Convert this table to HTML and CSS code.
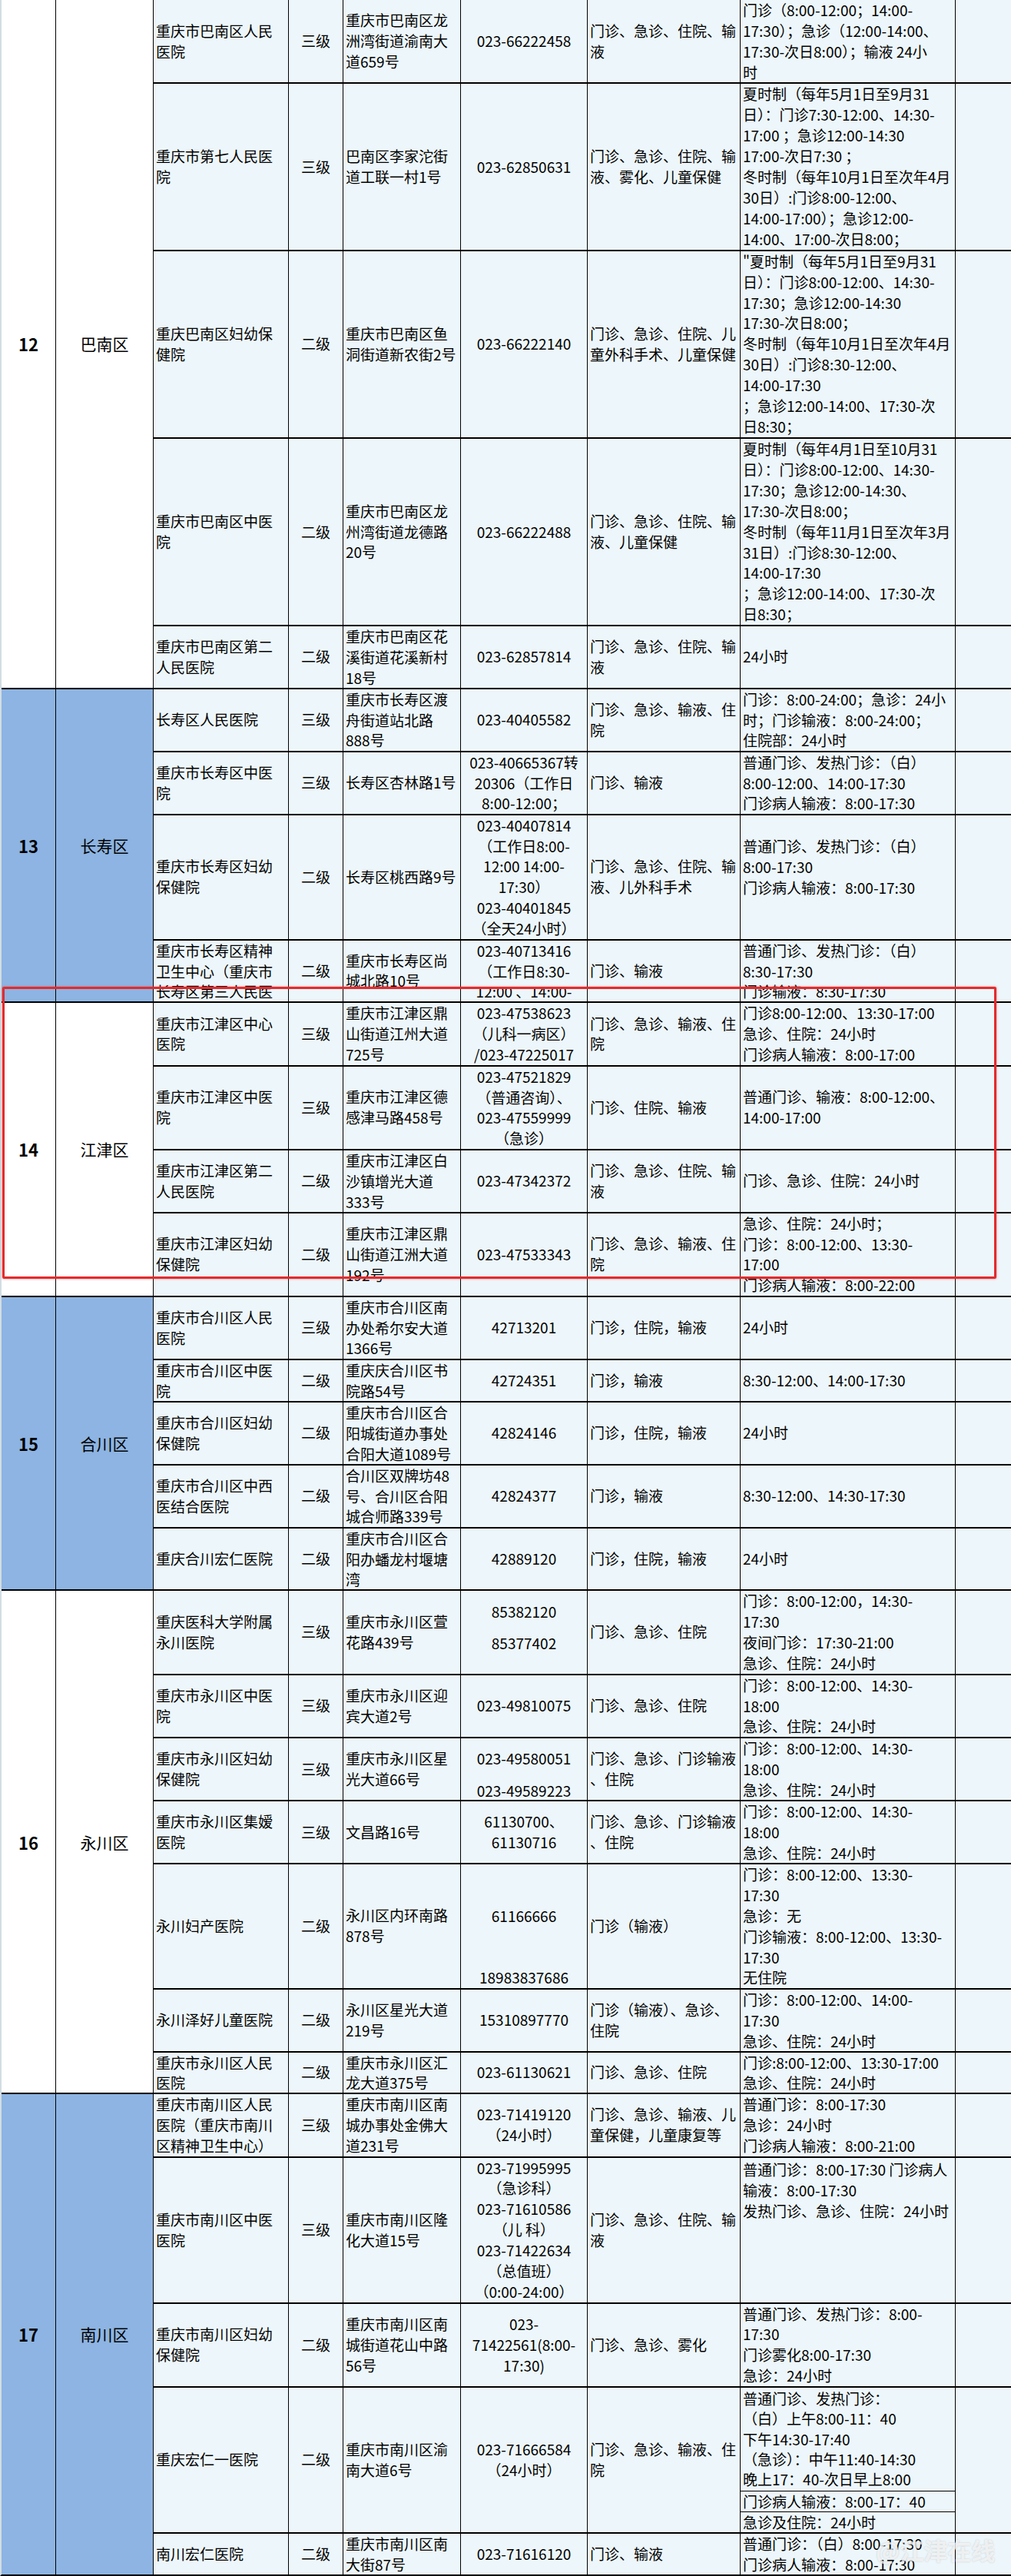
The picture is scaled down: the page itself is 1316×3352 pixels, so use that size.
FILE: index.html
```html
<!DOCTYPE html>
<html lang="zh-CN">
<head>
<meta charset="utf-8">
<title>医院列表</title>
<link rel="stylesheet" href="styles.css">
</head>
<body>
<div class="sheet">
  <div class="grid">
    <div class="grp w num g12">12</div><div class="grp w dist g12">巴南区</div>
    <div class="grp b num g13">13</div><div class="grp b dist g13">长寿区</div>
    <div class="grp w num g14">14</div><div class="grp w dist g14">江津区</div>
    <div class="grp b num g15">15</div><div class="grp b dist g15">合川区</div>
    <div class="grp w num g16">16</div><div class="grp w dist g16">永川区</div>
    <div class="grp b num g17">17</div><div class="grp b dist g17">南川区</div>

    <!-- R1 -->
    <div class="c"><p>重庆市巴南区人民<br>医院</p></div>
    <div class="c m"><p>三级</p></div>
    <div class="c"><p>重庆市巴南区龙<br>洲湾街道渝南大<br>道659号</p></div>
    <div class="c m"><p>023-66222458</p></div>
    <div class="c"><p>门诊、急诊、住院、输<br>液</p></div>
    <div class="c"><p>门诊（8:00-12:00；14:00-<br>17:30）；急诊（12:00-14:00、<br>17:30-次日8:00）；输液 24小<br>时</p></div>
    <div class="c"></div>

    <!-- R2 -->
    <div class="c"><p>重庆市第七人民医<br>院</p></div>
    <div class="c m"><p>三级</p></div>
    <div class="c"><p>巴南区李家沱街<br>道工联一村1号</p></div>
    <div class="c m"><p>023-62850631</p></div>
    <div class="c"><p>门诊、急诊、住院、输<br>液、雾化、儿童保健</p></div>
    <div class="c"><p>夏时制（每年5月1日至9月31<br>日）：门诊7:30-12:00、14:30-<br>17:00 ；急诊12:00-14:30<br>17:00-次日7:30 ；<br>冬时制（每年10月1日至次年4月<br>30日）:门诊8:00-12:00、<br>14:00-17:00）；急诊12:00-<br>14:00、17:00-次日8:00；</p></div>
    <div class="c"></div>

    <!-- R3 -->
    <div class="c"><p>重庆巴南区妇幼保<br>健院</p></div>
    <div class="c m"><p>二级</p></div>
    <div class="c"><p>重庆市巴南区鱼<br>洞街道新农街2号</p></div>
    <div class="c m"><p>023-66222140</p></div>
    <div class="c"><p>门诊、急诊、住院、儿<br>童外科手术、儿童保健</p></div>
    <div class="c"><p>"夏时制（每年5月1日至9月31<br>日）：门诊8:00-12:00、14:30-<br>17:30；急诊12:00-14:30<br>17:30-次日8:00；<br>冬时制（每年10月1日至次年4月<br>30日）:门诊8:30-12:00、<br>14:00-17:30<br>；急诊12:00-14:00、17:30-次<br>日8:30；</p></div>
    <div class="c"></div>

    <!-- R4 -->
    <div class="c"><p>重庆市巴南区中医<br>院</p></div>
    <div class="c m"><p>二级</p></div>
    <div class="c"><p>重庆市巴南区龙<br>州湾街道龙德路<br>20号</p></div>
    <div class="c m"><p>023-66222488</p></div>
    <div class="c"><p>门诊、急诊、住院、输<br>液、儿童保健</p></div>
    <div class="c"><p>夏时制（每年4月1日至10月31<br>日）：门诊8:00-12:00、14:30-<br>17:30；急诊12:00-14:30、<br>17:30-次日8:00；<br>冬时制（每年11月1日至次年3月<br>31日）:门诊8:30-12:00、<br>14:00-17:30<br>；急诊12:00-14:00、17:30-次<br>日8:30；</p></div>
    <div class="c"></div>

    <!-- R5 -->
    <div class="c"><p>重庆市巴南区第二<br>人民医院</p></div>
    <div class="c m"><p>二级</p></div>
    <div class="c"><p>重庆市巴南区花<br>溪街道花溪新村<br>18号</p></div>
    <div class="c m"><p>023-62857814</p></div>
    <div class="c"><p>门诊、急诊、住院、输<br>液</p></div>
    <div class="c"><p>24小时</p></div>
    <div class="c"></div>

    <!-- R6 -->
    <div class="c"><p>长寿区人民医院</p></div>
    <div class="c m"><p>三级</p></div>
    <div class="c"><p>重庆市长寿区渡<br>舟街道站北路<br>888号</p></div>
    <div class="c m"><p>023-40405582</p></div>
    <div class="c"><p>门诊、急诊、输液、住<br>院</p></div>
    <div class="c"><p>门诊：8:00-24:00；急诊：24小<br>时；门诊输液：8:00-24:00；<br>住院部：24小时</p></div>
    <div class="c"></div>

    <!-- R7 -->
    <div class="c"><p>重庆市长寿区中医<br>院</p></div>
    <div class="c m"><p>三级</p></div>
    <div class="c"><p>长寿区杏林路1号</p></div>
    <div class="c m"><p>023-40665367转<br>20306（工作日<br>8:00-12:00；</p></div>
    <div class="c"><p>门诊、输液</p></div>
    <div class="c"><p>普通门诊、发热门诊：（白）<br>8:00-12:00、14:00-17:30<br>门诊病人输液：8:00-17:30</p></div>
    <div class="c"></div>

    <!-- R8 -->
    <div class="c"><p>重庆市长寿区妇幼<br>保健院</p></div>
    <div class="c m"><p>二级</p></div>
    <div class="c"><p>长寿区桃西路9号</p></div>
    <div class="c m"><p>023-40407814<br>（工作日8:00-<br>12:00 14:00-<br>17:30）<br>023-40401845<br>（全天24小时）</p></div>
    <div class="c"><p>门诊、急诊、住院、输<br>液、儿外科手术</p></div>
    <div class="c top"><p class="pt-line">普通门诊、发热门诊：（白）<br>8:00-17:30</p><p class="mt-wide">门诊病人输液：8:00-17:30</p></div>
    <div class="c"></div>

    <!-- R9 -->
    <div class="c"><p>重庆市长寿区精神<br>卫生中心（重庆市<br>长寿区第三人民医</p></div>
    <div class="c m"><p>二级</p></div>
    <div class="c"><p>重庆市长寿区尚<br>城北路10号</p></div>
    <div class="c m"><p>023-40713416<br>（工作日8:30-<br>12:00 、14:00-</p></div>
    <div class="c"><p>门诊、输液</p></div>
    <div class="c"><p>普通门诊、发热门诊：（白）<br>8:30-17:30<br>门诊输液：8:30-17:30</p></div>
    <div class="c"></div>

    <!-- R10 -->
    <div class="c"><p>重庆市江津区中心<br>医院</p></div>
    <div class="c m"><p>三级</p></div>
    <div class="c"><p>重庆市江津区鼎<br>山街道江州大道<br>725号</p></div>
    <div class="c m"><p>023-47538623<br>（儿科一病区）<br>/023-47225017</p></div>
    <div class="c"><p>门诊、急诊、输液、住<br>院</p></div>
    <div class="c"><p>门诊8:00-12:00、13:30-17:00<br>急诊、住院：24小时<br>门诊病人输液：8:00-17:00</p></div>
    <div class="c"></div>

    <!-- R11 -->
    <div class="c"><p>重庆市江津区中医<br>院</p></div>
    <div class="c m"><p>三级</p></div>
    <div class="c"><p>重庆市江津区德<br>感津马路458号</p></div>
    <div class="c m"><p>023-47521829<br>（普通咨询）、<br>023-47559999<br>（急诊）</p></div>
    <div class="c"><p>门诊、住院、输液</p></div>
    <div class="c"><p>普通门诊、输液：8:00-12:00、<br>14:00-17:00</p></div>
    <div class="c"></div>

    <!-- R12 -->
    <div class="c"><p>重庆市江津区第二<br>人民医院</p></div>
    <div class="c m"><p>二级</p></div>
    <div class="c"><p>重庆市江津区白<br>沙镇增光大道<br>333号</p></div>
    <div class="c m"><p>023-47342372</p></div>
    <div class="c"><p>门诊、急诊、住院、输<br>液</p></div>
    <div class="c"><p>门诊、急诊、住院：24小时</p></div>
    <div class="c"></div>

    <!-- R13 -->
    <div class="c"><p>重庆市江津区妇幼<br>保健院</p></div>
    <div class="c m"><p>二级</p></div>
    <div class="c"><p>重庆市江津区鼎<br>山街道江洲大道<br>192号</p></div>
    <div class="c m"><p>023-47533343</p></div>
    <div class="c"><p>门诊、急诊、输液、住<br>院</p></div>
    <div class="c"><p>急诊、住院：24小时；<br>门诊：8:00-12:00、13:30-<br>17:00<br>门诊病人输液：8:00-22:00</p></div>
    <div class="c"></div>

    <!-- R14 -->
    <div class="c"><p>重庆市合川区人民<br>医院</p></div>
    <div class="c m"><p>三级</p></div>
    <div class="c"><p>重庆市合川区南<br>办处希尔安大道<br>1366号</p></div>
    <div class="c m"><p>42713201</p></div>
    <div class="c"><p>门诊，住院，输液</p></div>
    <div class="c"><p>24小时</p></div>
    <div class="c"></div>

    <!-- R15 -->
    <div class="c"><p>重庆市合川区中医<br>院</p></div>
    <div class="c m"><p>二级</p></div>
    <div class="c"><p>重庆庆合川区书<br>院路54号</p></div>
    <div class="c m"><p>42724351</p></div>
    <div class="c"><p>门诊，输液</p></div>
    <div class="c"><p>8:30-12:00、14:00-17:30</p></div>
    <div class="c"></div>

    <!-- R16 -->
    <div class="c"><p>重庆市合川区妇幼<br>保健院</p></div>
    <div class="c m"><p>二级</p></div>
    <div class="c"><p>重庆市合川区合<br>阳城街道办事处<br>合阳大道1089号</p></div>
    <div class="c m"><p>42824146</p></div>
    <div class="c"><p>门诊，住院，输液</p></div>
    <div class="c"><p>24小时</p></div>
    <div class="c"></div>

    <!-- R17 -->
    <div class="c"><p>重庆市合川区中西<br>医结合医院</p></div>
    <div class="c m"><p>二级</p></div>
    <div class="c"><p>合川区双牌坊48<br>号、合川区合阳<br>城合师路339号</p></div>
    <div class="c m"><p>42824377</p></div>
    <div class="c"><p>门诊，输液</p></div>
    <div class="c"><p>8:30-12:00、14:30-17:30</p></div>
    <div class="c"></div>

    <!-- R18 -->
    <div class="c"><p>重庆合川宏仁医院</p></div>
    <div class="c m"><p>二级</p></div>
    <div class="c"><p>重庆市合川区合<br>阳办蟠龙村堰塘<br>湾</p></div>
    <div class="c m"><p>42889120</p></div>
    <div class="c"><p>门诊，住院，输液</p></div>
    <div class="c"><p>24小时</p></div>
    <div class="c"></div>

    <!-- R19 -->
    <div class="c"><p>重庆医科大学附属<br>永川医院</p></div>
    <div class="c m"><p>三级</p></div>
    <div class="c"><p>重庆市永川区萱<br>花路439号</p></div>
    <div class="c m top split"><p>85382120</p><p>85377402</p></div>
    <div class="c"><p>门诊、急诊、住院</p></div>
    <div class="c"><p>门诊：8:00-12:00，14:30-<br>17:30<br>夜间门诊：17:30-21:00<br>急诊、住院：24小时</p></div>
    <div class="c"></div>

    <!-- R20 -->
    <div class="c"><p>重庆市永川区中医<br>院</p></div>
    <div class="c m"><p>三级</p></div>
    <div class="c"><p>重庆市永川区迎<br>宾大道2号</p></div>
    <div class="c m"><p>023-49810075</p></div>
    <div class="c"><p>门诊、急诊、住院</p></div>
    <div class="c"><p>门诊：8:00-12:00、14:30-<br>18:00<br>急诊、住院：24小时</p></div>
    <div class="c"></div>

    <!-- R21 -->
    <div class="c"><p>重庆市永川区妇幼<br>保健院</p></div>
    <div class="c m"><p>三级</p></div>
    <div class="c"><p>重庆市永川区星<br>光大道66号</p></div>
    <div class="c m top split"><p>023-49580051</p><p>023-49589223</p></div>
    <div class="c"><p>门诊、急诊、门诊输液<br>、住院</p></div>
    <div class="c"><p>门诊：8:00-12:00、14:30-<br>18:00<br>急诊、住院：24小时</p></div>
    <div class="c"></div>

    <!-- R22 -->
    <div class="c"><p>重庆市永川区集嫒<br>医院</p></div>
    <div class="c m"><p>三级</p></div>
    <div class="c"><p>文昌路16号</p></div>
    <div class="c m"><p>61130700、<br>61130716</p></div>
    <div class="c"><p>门诊、急诊、门诊输液<br>、住院</p></div>
    <div class="c"><p>门诊：8:00-12:00、14:30-<br>18:00<br>急诊、住院：24小时</p></div>
    <div class="c"></div>

    <!-- R23 -->
    <div class="c"><p>永川妇产医院</p></div>
    <div class="c m"><p>二级</p></div>
    <div class="c"><p>永川区内环南路<br>878号</p></div>
    <div class="c m"><p><br><br>61166666<br><br><br>18983837686</p></div>
    <div class="c"><p>门诊（输液）</p></div>
    <div class="c"><p>门诊：8:00-12:00、13:30-<br>17:30<br>急诊：无<br>门诊输液：8:00-12:00、13:30-<br>17:30<br>无住院</p></div>
    <div class="c"></div>

    <!-- R24 -->
    <div class="c"><p>永川泽好儿童医院</p></div>
    <div class="c m"><p>二级</p></div>
    <div class="c"><p>永川区星光大道<br>219号</p></div>
    <div class="c m"><p>15310897770</p></div>
    <div class="c"><p>门诊（输液）、急诊、<br>住院</p></div>
    <div class="c"><p>门诊：8:00-12:00、14:00-<br>17:30<br>急诊、住院：24小时</p></div>
    <div class="c"></div>

    <!-- R25 -->
    <div class="c"><p>重庆市永川区人民<br>医院</p></div>
    <div class="c m"><p>二级</p></div>
    <div class="c"><p>重庆市永川区汇<br>龙大道375号</p></div>
    <div class="c m"><p>023-61130621</p></div>
    <div class="c"><p>门诊、急诊、住院</p></div>
    <div class="c"><p>门诊:8:00-12:00、13:30-17:00<br>急诊、住院：24小时</p></div>
    <div class="c"></div>

    <!-- R26 -->
    <div class="c"><p>重庆市南川区人民<br>医院（重庆市南川<br>区精神卫生中心）</p></div>
    <div class="c m"><p>三级</p></div>
    <div class="c"><p>重庆市南川区南<br>城办事处金佛大<br>道231号</p></div>
    <div class="c m"><p>023-71419120<br>（24小时）</p></div>
    <div class="c"><p>门诊、急诊、输液、儿<br>童保健，儿童康复等</p></div>
    <div class="c"><p>普通门诊：8:00-17:30<br>急诊：24小时<br>门诊病人输液：8:00-21:00</p></div>
    <div class="c"></div>

    <!-- R27 -->
    <div class="c"><p>重庆市南川区中医<br>医院</p></div>
    <div class="c m"><p>三级</p></div>
    <div class="c"><p>重庆市南川区隆<br>化大道15号</p></div>
    <div class="c m"><p>023-71995995<br>（急诊科）<br>023-71610586<br>（儿 科）<br>023-71422634<br>（总值班）<br>（0:00-24:00）</p></div>
    <div class="c"><p>门诊、急诊、住院、输<br>液</p></div>
    <div class="c top"><p class="pt-small">普通门诊：8:00-17:30 门诊病人<br>输液：8:00-17:30</p><p class="mt-half">发热门诊、急诊、住院：24小时</p></div>
    <div class="c"></div>

    <!-- R28 -->
    <div class="c"><p>重庆市南川区妇幼<br>保健院</p></div>
    <div class="c m"><p>二级</p></div>
    <div class="c"><p>重庆市南川区南<br>城街道花山中路<br>56号</p></div>
    <div class="c m"><p>023-<br>71422561(8:00-<br>17:30)</p></div>
    <div class="c"><p>门诊、急诊、雾化</p></div>
    <div class="c"><p>普通门诊、发热门诊：8:00-<br>17:30<br>门诊雾化8:00-17:30<br>急诊：24小时</p></div>
    <div class="c"></div>

    <!-- R29 -->
    <div class="c"><p>重庆宏仁一医院</p></div>
    <div class="c m"><p>二级</p></div>
    <div class="c"><p>重庆市南川区渝<br>南大道6号</p></div>
    <div class="c m"><p>023-71666584<br>（24小时）</p></div>
    <div class="c"><p>门诊、急诊、输液、住<br>院</p></div>
    <div class="c parts">
      <div class="part-main"><p>普通门诊、发热门诊：<br>（白）上午8:00-11：40<br>下午14:30-17:40<br>（急诊）：中午11:40-14:30<br>晚上17：40-次日早上8:00</p></div>
      <div class="part-line"><p>门诊病人输液：8:00-17：40</p></div>
      <div class="part-line part-last"><p>急诊及住院：24小时</p></div>
    </div>
    <div class="c"></div>

    <!-- R30 -->
    <div class="c"><p>南川宏仁医院</p></div>
    <div class="c m"><p>二级</p></div>
    <div class="c"><p>重庆市南川区南<br>大街87号</p></div>
    <div class="c m"><p>023-71616120</p></div>
    <div class="c"><p>门诊、输液</p></div>
    <div class="c"><p>普通门诊：（白）8:00-17:30<br>门诊病人输液：8:00-17:30</p></div>
    <div class="c"></div>
  </div>

  <div class="highlight"></div>
  <div class="watermark">@江津在线</div>
</div>
</body>
</html>
```

FILE: styles.css
```css
html, body {
  margin: 0;
  padding: 0;
  background: #ffffff;
}

body {
  font-family: "Noto Sans CJK SC", "Noto Sans", "DejaVu Sans", sans-serif;
  color: #000000;
}

.sheet {
  position: relative;
  width: 1316px;
}

.grid {
  display: grid;
  grid-template-columns: 70px 126px 175px 70px 152px 164px 198px 279px 1fr;
  grid-template-rows:
    107.3px 215.4px 242.3px 242px 79.7px
    80px 80px 161px 79.6px
    80.4px 107.3px 79.7px 107px
    80.3px 53px 79.7px 80px 79.6px
    107.4px 80.3px 80.3px 79.7px 161px 79.7px 52.6px
    80.4px 188px 107px 188.3px 52.7px;
  column-gap: 1px;
  row-gap: 2px;
  background: #000000;
  border-left: 2px solid #d3dce4;
  border-bottom: 2px solid #000000;
}

/* merged group cells (number + district) */
.grp {
  display: flex;
  align-items: center;
  justify-content: center;
  overflow: hidden;
}

.grp.w { background: #ffffff; }
.grp.b { background: #8db4e2; }

.num {
  grid-column: 1;
  font-weight: 700;
  font-size: 22px;
}

.dist {
  grid-column: 2;
  font-size: 21px;
}

.g12 { grid-row: 1 / 6; }
.g13 { grid-row: 6 / 10; }
.g14 { grid-row: 10 / 14; }
.g15 { grid-row: 14 / 19; }
.g16 { grid-row: 19 / 26; }
.g17 { grid-row: 26 / 31; }

/* ordinary cells */
.c {
  background: #edf6fa;
  overflow: hidden;
  display: flex;
  flex-direction: column;
  justify-content: safe center;
  padding: 0 3px;
  font-size: 19px;
  line-height: 26.9px;
  white-space: nowrap;
  min-width: 0;
  min-height: 0;
}

.c p {
  margin: 0;
}

.m {
  text-align: center;
}

.top {
  justify-content: flex-start;
}

/* hours cell of 长寿区妇幼保健院 */
.pt-line { padding-top: 27.5px; }
.mt-wide { margin-top: 41.2px; }

/* two phone numbers with a small blank between */
.split { padding-top: 13.4px; }
.split p + p { margin-top: 14.3px; }

/* hours cell of 南川区中医医院 */
.pt-small { padding-top: 2.2px; }
.mt-half { margin-top: 11.2px; }

/* hours cell split into sub-rows (宏仁一医院) */
.parts {
  padding: 0;
  justify-content: flex-start;
}

.part-main {
  flex: none;
  height: 134.5px;
  display: flex;
  flex-direction: column;
  justify-content: center;
  padding: 0 3px;
  line-height: 26.4px;
}

.part-line {
  flex: none;
  height: 25.6px;
  border-top: 1px solid #000000;
  display: flex;
  flex-direction: column;
  justify-content: center;
  padding: 0 3px;
  line-height: 24px;
}

.part-last {
  flex: 1 1 auto;
  height: auto;
}

/* red highlight frame drawn over the 江津区 rows */
.highlight {
  position: absolute;
  left: 3px;
  top: 1284px;
  width: 1294px;
  height: 380px;
  box-sizing: border-box;
  border: 3px solid #e32b2d;
  border-radius: 2px;
  box-shadow: 0 0 3px rgba(227, 43, 45, 0.6);
  pointer-events: none;
}

/* faint watermark in the bottom-right corner */
.watermark {
  position: absolute;
  left: 1140px;
  top: 3298px;
  font-size: 31px;
  font-weight: 700;
  line-height: 40px;
  color: rgba(255, 255, 255, 0.72);
  text-shadow: 0 0 2px rgba(110, 110, 110, 0.35);
  white-space: nowrap;
  pointer-events: none;
}
```
